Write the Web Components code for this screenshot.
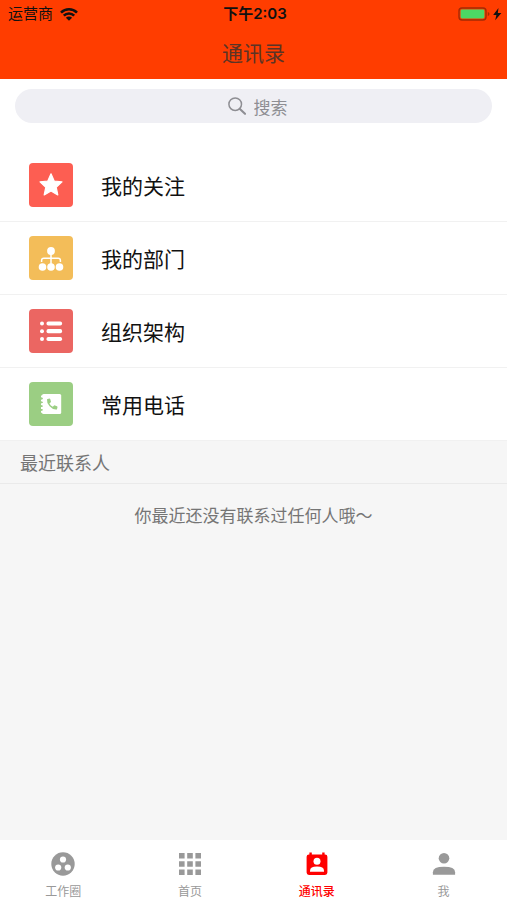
<!DOCTYPE html>
<html lang="zh-CN">
<head>
<meta charset="utf-8">
<meta name="viewport" content="width=device-width, initial-scale=1">
<title>通讯录</title>
<style>
body {
	margin: 0;
	font-family: "Noto Sans CJK SC", sans-serif;
	color: #111;
	background: #f6f6f6;
}
</style>
</head>
<body>

<contacts-app></contacts-app>

<script>
const icons = {
	wifi: `<svg viewBox="0 0 18 13" width="18" height="13" fill="none" stroke="currentColor" stroke-width="2.6">
		<path d="M1 4.6a11.4 11.4 0 0 1 16 0M3.8 7.7a7.4 7.4 0 0 1 10.4 0"/>
		<path d="M9 12.8 5.9 9.8a4.4 4.4 0 0 1 6.2 0z" fill="currentColor" stroke="none"/></svg>`,
	battery: `<svg viewBox="0 0 44 14" width="44" height="14">
		<rect x="1" y="1" width="27" height="12" rx="3" fill="none" stroke="#a32b05" stroke-width="1.4"/>
		<rect x="2.6" y="2.6" width="23.8" height="8.8" rx="1.4" fill="#4cd964"/>
		<path d="M29.8 5v4q1.7-.6 1.7-2t-1.7-2z" fill="#a32b05"/>
		<path d="M40.5 1 35.2 8h3.2l-1.200 5.200L43.400 5.900h-3.600z" fill="#111"/></svg>`,
	search: `<svg viewBox="0 0 18 18" width="18" height="18" fill="none" stroke="currentColor">
		<circle cx="7.2" cy="7.2" r="6.3" stroke-width="1.5"/>
		<path d="m11.9 11.9 5.1 4.9" stroke-width="2.1" stroke-linecap="round"/></svg>`,
	star: `<svg viewBox="0 0 44 44" fill="#fff" stroke="#fff" stroke-width="1.2" stroke-linejoin="round">
		<path d="m22 10.800 3.200 7.200 7.800.900-5.800 5.300 1.600 7.700-6.800-3.900-6.800 3.900 1.600-7.700-5.800-5.300 7.800-.900z"/></svg>`,
	department: `<svg viewBox="0 0 44 44" fill="#fff">
		<circle cx="22" cy="15" r="3.9"/>
		<circle cx="13.500" cy="31" r="3.800"/><circle cx="22" cy="31" r="3.800"/><circle cx="30.500" cy="31" r="3.800"/>
		<path d="M22 17v11M12.600 26v-1.600q0-2.200 2.200-2.200h14.400q2.200 0 2.200 2.200V26" fill="none" stroke="#fff" stroke-width="1.500"/></svg>`,
	list: `<svg viewBox="0 0 44 44" fill="#fff">
		<circle cx="13" cy="14.5" r="2"/><circle cx="13" cy="22.2" r="2"/><circle cx="13" cy="30" r="2"/>
		<rect x="17.5" y="12.4" width="15.6" height="4.2" rx="1.8"/>
		<rect x="17.5" y="20.1" width="15.6" height="4.2" rx="1.8"/>
		<rect x="17.5" y="27.9" width="15.6" height="4.2" rx="1.8"/></svg>`,
	phone: `<svg viewBox="0 0 44 44">
		<rect x="13" y="12" width="19.2" height="20" rx="1.6" fill="#fff"/>
		<path d="M12 14.6h2.4M12 18.4h2.4M12 22.2h2.4M12 26h2.4M12 29.8h2.4" stroke="#fff" stroke-width="2"/>
		<path d="M11.8 16.5h2M11.8 20.3h2M11.8 24.1h2M11.8 27.9h2" stroke="#9bce83" stroke-width="1.3"/>
		<path d="M18 17.200 20.400 16.500q.700 0 .900.700l.700 2.700-1.600 1.600q1.200 2.200 3.400 3.200l1.500-1.400 2.700 1q.600.300.500.900l-.600 2.200q-4.200.500-7.300-3.100T18 17.200z" fill="#9bce83"/></svg>`,
	work: `<svg viewBox="0 0 24 24"><circle cx="12" cy="12" r="11.7" fill="currentColor"/>
		<g fill="#fff"><circle cx="12" cy="7.5" r="3.1"/><circle cx="7.2" cy="15.5" r="3.1"/><circle cx="16.8" cy="15.5" r="3.1"/></g></svg>`,
	home: `<svg viewBox="0 0 24 24" fill="currentColor">
		<path d="M1 1h5.6v5.6H1zM9.2 1h5.6v5.6H9.2zM17.4 1H23v5.6h-5.6zM1 9.2h5.6v5.6H1zM9.2 9.2h5.6v5.6H9.2zM17.4 9.2H23v5.6h-5.6zM1 17.4h5.6V23H1zM9.2 17.4h5.6V23H9.2zM17.4 17.4H23V23h-5.6z"/></svg>`,
	contacts: `<svg viewBox="0 0 24 24"><path d="M4.4.4h2.4v2h10.4v-2h2.4v2h.4q2.4 0 2.4 2.4v15.8q0 2.4-2.4 2.4H4q-2.4 0-2.4-2.4V4.8q0-2.4 2.4-2.4h.4z" fill="currentColor"/>
		<circle cx="12" cy="9.3" r="3.5" fill="#fff"/>
		<path d="M5 19.7v-1q0-4.1 7-4.1t7 4.1v1z" fill="#fff"/></svg>`,
	me: `<svg viewBox="0 0 24 24" fill="currentColor"><circle cx="12" cy="6.3" r="5.3"/>
		<path d="M.9 22.8v-2.6q0-5.4 11.1-5.4t11.1 5.4v2.6z"/></svg>`,
};


class ShadowElement extends HTMLElement {

	connectedCallback () {
		if (this.shadowRoot) return;
		const template = document.createElement('template');
		template.innerHTML = `<style>${this.styles}</style>${this.html}`;
		this.attachShadow({ mode: 'open' });
		this.shadowRoot.appendChild(template.content.cloneNode(true));
	}

}


class StatusBar extends ShadowElement {

	get styles () {
		return `
		:host {
			display: grid;
			grid-template-columns: 1fr auto 1fr;
			align-items: center;
			height: 28px;
			padding: 0 5px 0 8px;
			font-family: Inter, "Noto Sans CJK SC", sans-serif;
			font-size: 15px;
			line-height: 20px;
			color: #111;
		}
		.carrier { display: flex; align-items: center; gap: 7px; }
		.time { font-weight: 600; }
		.power { display: flex; justify-content: flex-end; }`;
	}

	get html () {
		return `<div class="carrier"><slot></slot>${icons.wifi}</div>
		<div class="time"><slot name="time"></slot></div>
		<div class="power">${icons.battery}</div>`;
	}

}


class NavHeader extends ShadowElement {

	get styles () {
		return `
		:host { display: block; background: #ff3d00; }
		h1 {
			margin: 0;
			padding: 9px 16px 12px;
			font-size: 21px;
			line-height: 30px;
			font-weight: 400;
			text-align: center;
			color: #5a3426;
		}`;
	}

	get html () {
		return `<slot name="status"></slot><h1><slot></slot></h1>`;
	}

}


class SearchBar extends ShadowElement {

	get styles () {
		return `
		:host { display: block; padding: 10px 15px 26px; background: #fff; }
		label {
			display: flex;
			align-items: center;
			justify-content: center;
			gap: 8px;
			height: 34px;
			padding-left: 8px;
			border-radius: 17px;
			background: #efeff4;
			color: #8e8e93;
			cursor: text;
		}
		input {
			field-sizing: content;
			min-width: 34px;
			max-width: 80%;
			padding: 0;
			border: 0;
			outline: 0;
			background: none;
			font-family: Inter, "Noto Sans CJK SC", sans-serif;
			font-size: 17px;
			line-height: 24px;
			color: #111;
		}
		input::placeholder { color: #8e8e93; opacity: 1; }`;
	}

	get html () {
		const text = this.getAttribute('placeholder');
		return `<label>${icons.search}<input type="text" placeholder="${text}" aria-label="${text}"></label>`;
	}

}


class MenuItem extends ShadowElement {

	get styles () {
		return `
		:host { display: block; background: #fff; border-bottom: 1px solid #f1f1f1; }
		a {
			display: flex;
			align-items: center;
			gap: 28px;
			height: 72px;
			padding: 0 29px;
			font-size: 21px;
			line-height: 30px;
			color: #111;
			text-decoration: none;
		}
		.icon { width: 44px; height: 44px; border-radius: 4px; background: ${this.getAttribute('color')}; }
		svg { display: block; }`;
	}

	get html () {
		return `<a href="#"><span class="icon">${icons[this.getAttribute('icon')]}</span><slot></slot></a>`;
	}

}


class RecentContacts extends ShadowElement {

	get styles () {
		return `
		:host { display: block; flex: 1; background: #f6f6f6; }
		h2 {
			margin: 0;
			padding: 8px 20px;
			border-bottom: 1px solid #eaeaea;
			font-size: 18px;
			line-height: 26px;
			font-weight: 400;
			color: #757575;
		}
		p {
			margin: 0;
			padding: 19px 20px;
			font-size: 17px;
			line-height: 24px;
			text-align: center;
			color: #757575;
		}`;
	}

	get html () {
		return `<h2><slot name="title"></slot></h2><p><slot></slot></p>`;
	}

}


class TabItem extends ShadowElement {

	get styles () {
		return `
		:host { display: block; color: #999; }
		:host([active]) { color: #f00; font-weight: 500; }
		a {
			display: flex;
			flex-direction: column;
			align-items: center;
			gap: 6px;
			padding: 12px 0 0;
			font-size: 12px;
			line-height: 18px;
			color: inherit;
			text-decoration: none;
		}
		svg { width: 24px; height: 24px; }`;
	}

	get html () {
		return `<a href="#">${icons[this.getAttribute('icon')]}<span><slot></slot></span></a>`;
	}

}


class TabBar extends ShadowElement {

	get styles () {
		return `
		:host {
			display: grid;
			grid-auto-flow: column;
			grid-auto-columns: 1fr;
			height: 60px;
			background: #fff;
		}`;
	}

	get html () { return `<slot></slot>`; }

}


class ContactsApp extends ShadowElement {

	get styles () {
		return `
		:host { display: flex; flex-direction: column; min-height: 100vh; }`;
	}

	get html () {
		return `
		<nav-header>
			<status-bar slot="status">运营商<span slot="time">下午2:03</span></status-bar>
			通讯录
		</nav-header>
		<search-bar placeholder="搜索"></search-bar>
		<nav>
			<menu-item icon="star" color="#fd5e52">我的关注</menu-item>
			<menu-item icon="department" color="#f3bd59">我的部门</menu-item>
			<menu-item icon="list" color="#eb6662">组织架构</menu-item>
			<menu-item icon="phone" color="#9bce83">常用电话</menu-item>
		</nav>
		<recent-contacts>
			<span slot="title">最近联系人</span>
			你最近还没有联系过任何人哦～
		</recent-contacts>
		<tab-bar>
			<tab-item icon="work">工作圈</tab-item>
			<tab-item icon="home">首页</tab-item>
			<tab-item icon="contacts" active>通讯录</tab-item>
			<tab-item icon="me">我</tab-item>
		</tab-bar>`;
	}

}

customElements.define('status-bar', StatusBar);
customElements.define('nav-header', NavHeader);
customElements.define('search-bar', SearchBar);
customElements.define('menu-item', MenuItem);
customElements.define('recent-contacts', RecentContacts);
customElements.define('tab-item', TabItem);
customElements.define('tab-bar', TabBar);
customElements.define('contacts-app', ContactsApp);
</script>
</body>
</html>
